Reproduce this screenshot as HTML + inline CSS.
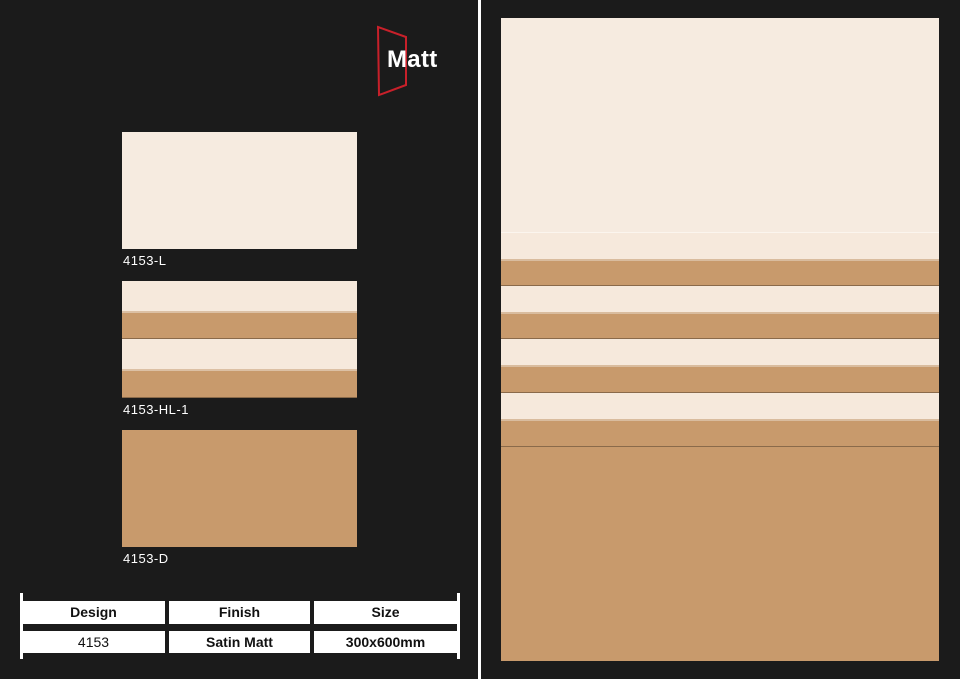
<!DOCTYPE html>
<html><head><meta charset="utf-8"><style>
*{margin:0;padding:0;box-sizing:border-box}
body{width:960px;height:679px;background:#1b1b1b;position:relative;overflow:hidden;font-family:"Liberation Sans",sans-serif}
.a{position:absolute}
.L{background:#f6e9dc}
.D{background:#c89a6c}
.lbl{color:#fff;font-size:13px;letter-spacing:0.5px}
.cell{position:absolute;background:#fff;color:#111;font-size:14px;font-weight:bold;text-align:center;line-height:22px}
</style></head><body>
<svg class="a" style="left:374px;top:25px" width="40" height="72" viewBox="0 0 40 72">
<path d="M4 2 L32 12 L32 60 L5 70 Z" fill="none" stroke="#c8202a" stroke-width="2"/>
</svg>
<div class="a" style="left:387px;top:46px;color:#fff;font-size:24px;font-weight:bold;letter-spacing:0.3px">Matt</div>

<div class="a L" style="left:122px;top:132px;width:235px;height:117px;background:#f6ebe0"></div>
<div class="a lbl" style="left:123px;top:253px">4153-L</div>

<div class="a L" style="left:122px;top:281px;width:235px;height:30px"></div>
<div class="a D" style="left:122px;top:311px;width:235px;height:28px;border-top:2px solid #dcc0a4;border-bottom:1px solid #8a6a4a"></div>
<div class="a L" style="left:122px;top:339px;width:235px;height:30px"></div>
<div class="a D" style="left:122px;top:369px;width:235px;height:29px;border-top:2px solid #dcc0a4;border-bottom:1px solid #8a6a4a"></div>
<div class="a lbl" style="left:123px;top:402px">4153-HL-1</div>

<div class="a D" style="left:122px;top:430px;width:235px;height:117px"></div>
<div class="a lbl" style="left:123px;top:551px">4153-D</div>

<div class="a" style="left:20px;top:593px;width:3px;height:66px;background:#fff"></div>
<div class="a" style="left:457px;top:593px;width:3px;height:66px;background:#fff"></div>
<div class="cell" style="left:22px;top:601px;width:143px;height:23px">Design</div>
<div class="cell" style="left:169px;top:601px;width:141px;height:23px">Finish</div>
<div class="cell" style="left:314px;top:601px;width:143px;height:23px">Size</div>
<div class="cell" style="left:22px;top:631px;width:143px;height:22px;font-weight:normal">4153</div>
<div class="cell" style="left:169px;top:631px;width:141px;height:22px">Satin Matt</div>
<div class="cell" style="left:314px;top:631px;width:143px;height:22px">300x600mm</div>

<div class="a" style="left:478px;top:0;width:3px;height:679px;background:#fff"></div>

<div class="a" style="left:501px;top:18px;width:438px;height:214px;background:#f6ebe0"></div>
<div class="a" style="left:501px;top:232px;width:438px;height:1px;background:#fbf5ee"></div>
<div class="a L" style="left:501px;top:233px;width:438px;height:27px"></div>
<div class="a D" style="left:501px;top:259px;width:438px;height:27px;border-top:2px solid #d9bc9e;border-bottom:1px solid #8a6a4a"></div>
<div class="a L" style="left:501px;top:286px;width:438px;height:27px"></div>
<div class="a D" style="left:501px;top:312px;width:438px;height:27px;border-top:2px solid #d9bc9e;border-bottom:1px solid #8a6a4a"></div>
<div class="a L" style="left:501px;top:339px;width:438px;height:27px"></div>
<div class="a D" style="left:501px;top:365px;width:438px;height:28px;border-top:2px solid #d9bc9e;border-bottom:1px solid #8a6a4a"></div>
<div class="a L" style="left:501px;top:393px;width:438px;height:27px"></div>
<div class="a D" style="left:501px;top:419px;width:438px;height:28px;border-top:2px solid #d9bc9e;border-bottom:1px solid #8a6a4a"></div>
<div class="a D" style="left:501px;top:447px;width:438px;height:214px"></div>
</body></html>
